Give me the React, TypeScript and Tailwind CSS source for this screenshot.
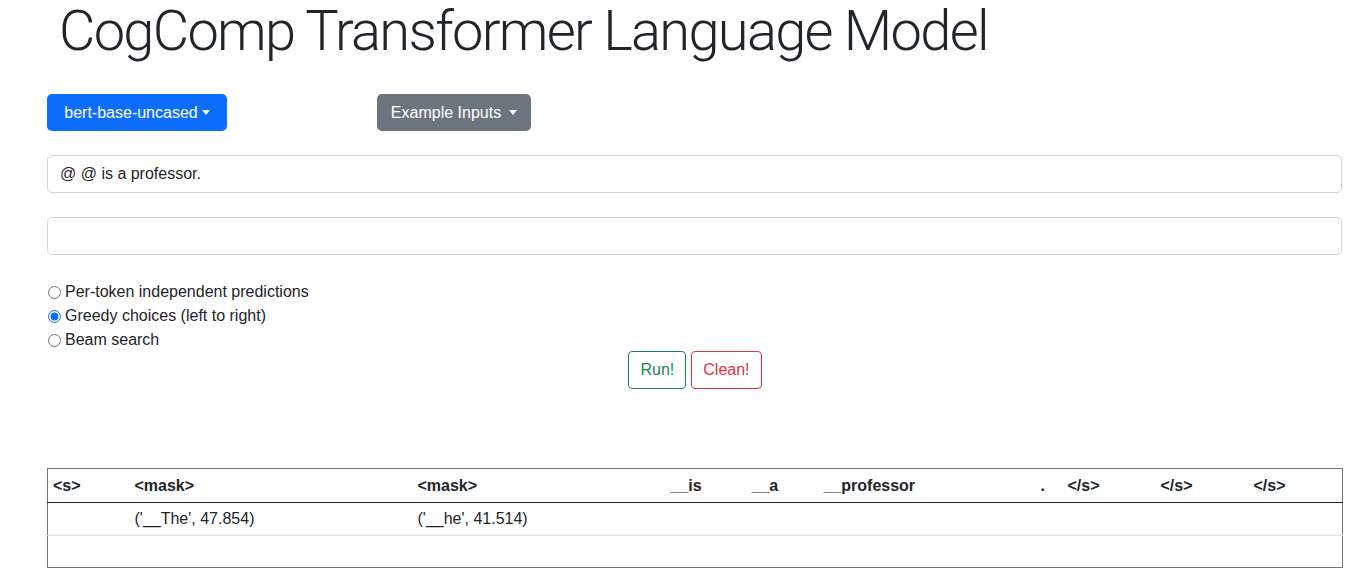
import { useState } from "react";

const headers = ["<s>", "<mask>", "<mask>", "__is", "__a", "__professor", ".", "</s>", "</s>", "</s>"];
const widths = ["w-[82px]", "w-[283px]", "w-[253px]", "w-[81px]", "w-[72px]", "w-[217px]", "w-[27px]", "w-[93px]", "w-[93px]", "w-[94px]"];
const preds = ["", "('__The', 47.854)", "('__he', 41.514)", "", "", "", "", "", "", ""];

function Caret({ gap }: { gap: string }) {
  return <span className={`inline-block ${gap} align-[3px] border-t-[5px] border-x-[4px] border-x-transparent border-t-white`} />;
}

export default function App() {
  const [mode, setMode] = useState("greedy");
  const options = [
    { id: "token", label: "Per-token independent predictions" },
    { id: "greedy", label: "Greedy choices (left to right)" },
    { id: "beam", label: "Beam search" },
  ];

  return (
    <div className="min-h-screen bg-white text-[#212529] font-['Helvetica_Neue','Liberation_Sans',Arial,sans-serif] text-base">
      <div className="mx-[47px] w-[1295px]">
        <h1 className="pl-[12px] text-[56px] leading-[1.2] font-light font-['Roboto',sans-serif] -mt-[2px] tracking-[-1.7px]">
          CogComp Transformer Language Model
        </h1>

        <div className="flex mt-[29px]">
          <button className="w-[180px] h-[37px] rounded-[5px] bg-[#0d6efd] text-white text-[16px] flex items-center justify-center">
            bert-base-uncased
            <Caret gap="ml-[4px]" />
          </button>
          <button className="ml-[150px] w-[154px] h-[37px] rounded-[5px] bg-[#6c757d] text-white text-[16px] flex items-center justify-center">
            Example Inputs
            <Caret gap="ml-[8px]" />
          </button>
        </div>

        <input
          className="mt-[24px] block w-full h-[38px] px-[12px] border border-[#ced4da] rounded-[5px] text-[16px] text-[#212529] outline-none"
          defaultValue="@ @ is a professor."
        />
        <input className="mt-[24px] block w-full h-[38px] px-[12px] border border-[#ced4da] rounded-[5px] text-[16px] outline-none" />

        <div className="mt-[25px] flex flex-col">
          {options.map((o) => (
            <label key={o.id} className="flex items-center h-[24px] leading-6">
              <input
                type="radio"
                name="mode"
                checked={mode === o.id}
                onChange={() => setMode(o.id)}
                className="ml-[1px] mr-[4px] w-[13px] h-[13px] accent-[#0d6efd]"
              />
              {o.label}
            </label>
          ))}
        </div>

        <div className="flex justify-center gap-[5px] -mt-[1px] pl-[1px]">
          <button className="h-[38px] px-[11px] border border-[#198754] text-[#198754] rounded-[4px] text-[16px]">Run!</button>
          <button className="h-[38px] px-[11px] border border-[#dc3545] text-[#dc3545] rounded-[4px] text-[16px]">Clean!</button>
        </div>

        <table className="mt-[79px] w-full table-fixed border border-[#777] border-collapse text-[16px]">
          <thead>
            <tr className="border-b border-[#212529] h-[34px]">
              {headers.map((h, i) => (
                <th key={i} className={`${widths[i]} text-left font-bold px-[5px] align-middle whitespace-nowrap`}>{h}</th>
              ))}
            </tr>
          </thead>
          <tbody>
            <tr className="border-b border-[#dee2e6] h-[33px]">
              {preds.map((p, i) => (
                <td key={i} className="px-[5px] align-middle whitespace-nowrap">{p}</td>
              ))}
            </tr>
            <tr className="h-[32px]">
              {preds.map((_, i) => (
                <td key={i} className="px-[5px]" />
              ))}
            </tr>
          </tbody>
        </table>
      </div>
    </div>
  );
}
